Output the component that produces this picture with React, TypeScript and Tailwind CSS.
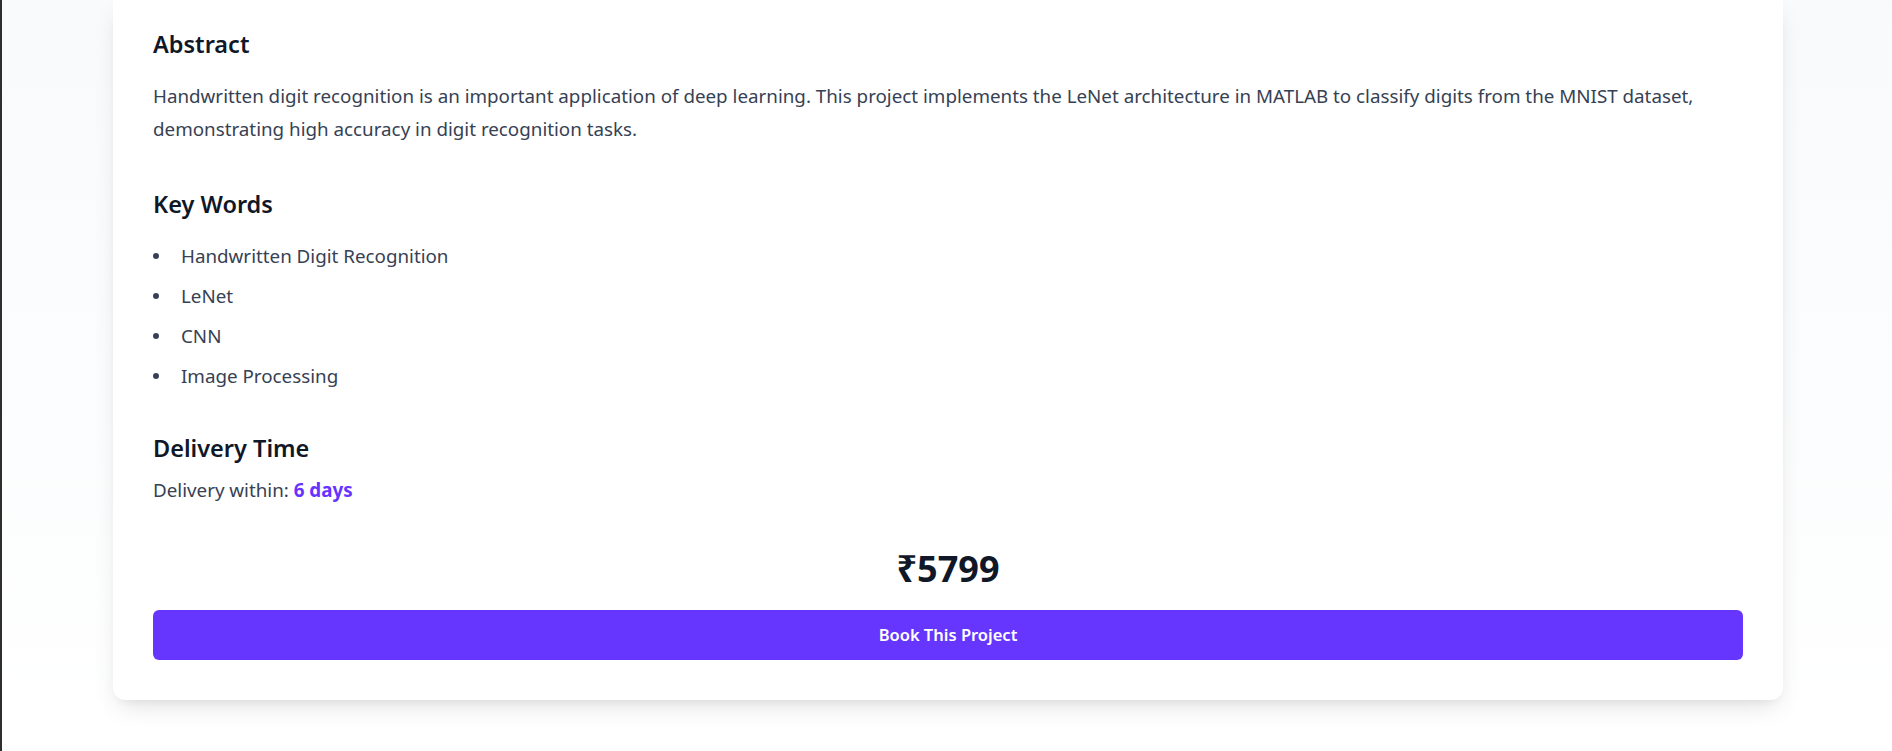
const keywords = [
  "Handwritten Digit Recognition",
  "LeNet",
  "CNN",
  "Image Processing",
];

export default function App() {
  return (
    <div
      className="min-h-[751px] border-l-2 border-[#2e2e2e] bg-gradient-to-b from-[#f8fafc] to-white pl-[111px] pr-[109px] pb-[51px]"
      style={{ fontFamily: '"Noto Sans", "Open Sans", sans-serif' }}
    >
      <div className="rounded-b-xl bg-white px-10 pt-[28px] pb-10 shadow-[0_10px_25px_-5px_rgba(0,0,0,0.12),0_6px_10px_-6px_rgba(0,0,0,0.08)]">
        {/* Abstract */}
        <h2 className="mb-5 text-[23.5px] font-semibold leading-8 text-gray-900">Abstract</h2>
        <p className="mb-[43px] text-[18.8px] leading-[32.5px] text-gray-700">
          Handwritten digit recognition is an important application of deep learning. This project
          implements the LeNet architecture in MATLAB to classify digits from the MNIST dataset,
          demonstrating high accuracy in digit recognition tasks.
        </p>

        {/* Key words */}
        <h2 className="mb-5 text-[23.5px] font-semibold leading-8 text-gray-900">Key Words</h2>
        <ul className="mb-10 flex flex-col gap-2">
          {keywords.map((k) => (
            <li key={k} className="flex items-center text-[18.8px] leading-8 text-gray-700">
              <span className="mr-[22px] h-[6px] w-[6px] shrink-0 rounded-full bg-gray-700" />
              {k}
            </li>
          ))}
        </ul>

        {/* Delivery */}
        <h2 className="mb-3 text-[23.5px] font-semibold leading-8 text-gray-900">Delivery Time</h2>
        <p className="text-[18.8px] leading-7 text-gray-700">
          Delivery within: <span className="font-bold text-[#6633ff]">6 days</span>
        </p>

        <div className="mt-[45px] mb-[21px] text-center text-4xl font-bold leading-10 text-gray-900">
          ₹5799
        </div>

        <button className="flex h-[50px] w-full items-center justify-center rounded-md bg-[#6636ff] text-[16.5px] font-semibold text-white">
          Book This Project
        </button>
      </div>
    </div>
  );
}
